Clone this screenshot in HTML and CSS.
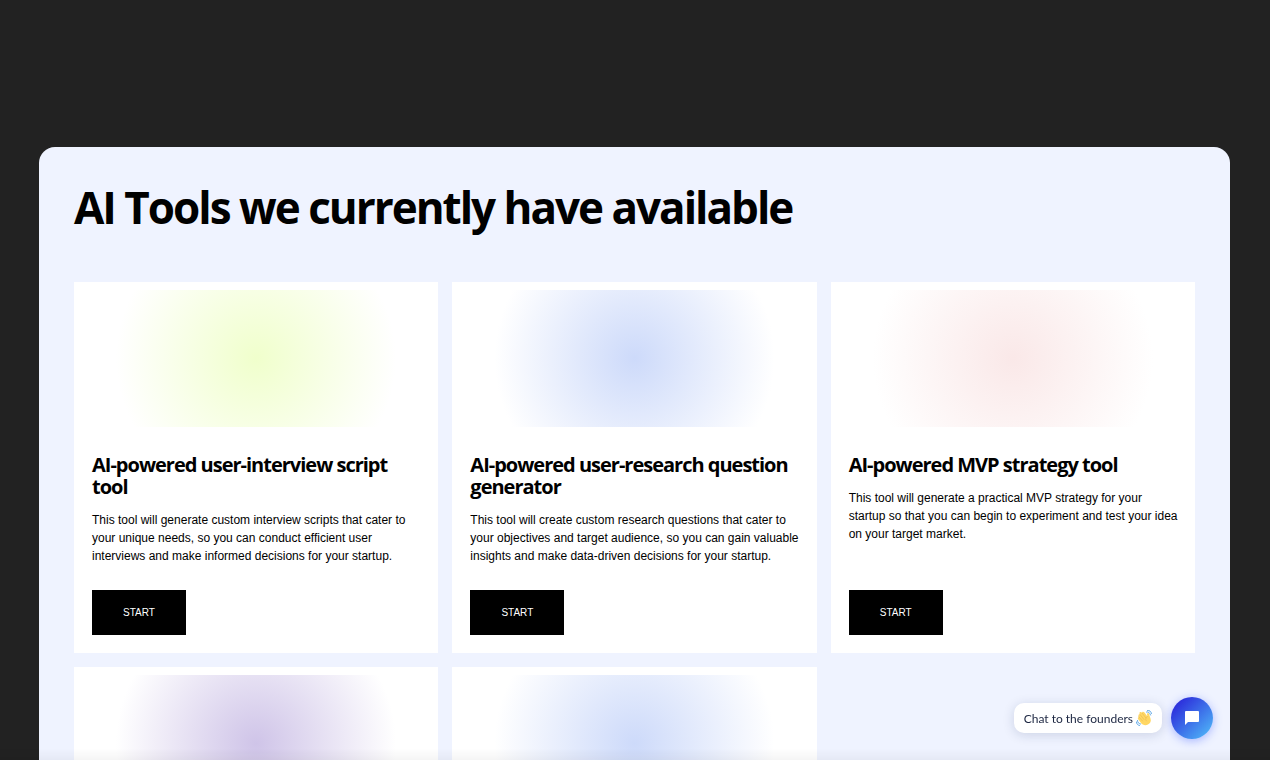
FILE: index.html
```html
<!DOCTYPE html>
<html lang="en">
<head>
    <meta charset="UTF-8">
    <meta name="viewport" content="width=device-width, initial-scale=1.0">
    <title>AI Tools</title>
    <link rel="stylesheet" href="styles.css">
</head>
<body>
    <main class="panel">
        <h1>AI Tools we currently have available</h1>
        <div class="tools">
            <article class="card">
                <div class="glow green"></div>
                <div class="card-body">
                    <h2>AI-powered user-interview script tool</h2>
                    <p>This tool will generate custom interview scripts that cater to your unique needs, so you can conduct efficient user interviews and make informed decisions for your startup.</p>
                    <button type="button" class="start">START</button>
                </div>
            </article>
            <article class="card">
                <div class="glow blue"></div>
                <div class="card-body">
                    <h2>AI-powered user-research question generator</h2>
                    <p>This tool will create custom research questions that cater to your objectives and target audience, so you can gain valuable insights and make data-driven decisions for your startup.</p>
                    <button type="button" class="start">START</button>
                </div>
            </article>
            <article class="card">
                <div class="glow pink"></div>
                <div class="card-body">
                    <h2>AI-powered MVP strategy tool</h2>
                    <p>This tool will generate a practical MVP strategy for your startup so that you can begin to experiment and test your idea on your target market.</p>
                    <button type="button" class="start">START</button>
                </div>
            </article>
            <article class="card">
                <div class="glow purple"></div>
            </article>
            <article class="card">
                <div class="glow blue"></div>
            </article>
        </div>
    </main>

    <div class="chat">
        <div class="chat-label">
            <span>Chat to the founders</span>
            <svg class="wave" viewBox="0 0 32 32" aria-hidden="true">
                <g fill="none" stroke="#5fa8e6" stroke-width="2" stroke-linecap="round">
                    <path d="M21 4c4-1 6 1 8 6M23 1c4-1 7 2 8 6M3 21c0 4 2 6 6 7M1 24c0 4 2 6 6 7"/>
                </g>
                <path fill="#ffd764" d="M5 12c-1-2 1-4 3-3L7 7c-1-2 2-4 4-2l1 1c0-3 3-3 5-1l6 8-1-4c0-3 3-4 4-1l3 9c2 6-1 10-5 12-5 3-11 1-14-3l-6-8c-1-2 0-4 2-4z"/>
                <path fill="none" stroke="#e3b04b" stroke-width="1" stroke-linecap="round" d="M8 9l8 10M12 6l8 10M5 13l8 9M23 13c-4 2-5 6-2 9"/>
            </svg>
        </div>
        <button type="button" class="chat-button" aria-label="Open chat">
            <svg viewBox="0 0 16 16" aria-hidden="true">
                <path fill="#fff" d="M2 1h12a1 1 0 0 1 1 1v9a1 1 0 0 1-1 1H4l-3 3V2a1 1 0 0 1 1-1z"/>
            </svg>
        </button>
    </div>
</body>
</html>
```

FILE: styles.css
```css
* {
    box-sizing: border-box;
}
body {
    margin: 0;
    padding: 147px 40px 40px 39px;
    background-color: #222;
    color: #000;
    font-family: "Liberation Sans", Arial, sans-serif;
}
/* soft shade along the bottom of the window */
body::after {
    content: "";
    position: fixed;
    left: 0;
    right: 0;
    bottom: 0;
    height: 12px;
    background: linear-gradient(transparent, rgba(0, 0, 0, 0.04));
    pointer-events: none;
}
.panel {
    padding: 35px;
    border-radius: 16px;
    background-color: #eff3ff;
}
h1, h2 {
    margin: 0;
    font-family: "Open Sans", sans-serif;
    font-weight: 700;
}
h1 {
    margin-bottom: 50px;
    font-size: 44px;
    line-height: 50px;
    letter-spacing: -2px;
}
.tools {
    display: grid;
    grid-template-columns: repeat(3, 1fr);
    gap: 14px;
}
.card {
    display: flex;
    flex-direction: column;
    padding-top: 8px;
    background-color: #fff;
}
.glow {
    height: 137px;
    background: radial-gradient(circle 140px, var(--glow), #fff);
}
.green {
    --glow: #f0ffcc;
}
.blue {
    --glow: #cddafa;
}
.pink {
    --glow: #fae8e8;
}
.purple {
    --glow: #cfc4e8;
}
.card-body {
    display: flex;
    flex: 1;
    flex-direction: column;
    align-items: flex-start;
    padding: 27px 14px 18px 18px;
}
h2 {
    font-size: 20px;
    line-height: 22px;
    letter-spacing: -1px;
}
p {
    margin: 13px 0 25px;
    font-size: 12px;
    line-height: 18px;
}
.start {
    width: 94px;
    height: 45px;
    margin-top: auto;
    border: none;
    background-color: #000;
    color: #fff;
    font-family: inherit;
    font-size: 10px;
    cursor: pointer;
}
.chat {
    position: fixed;
    right: 57px;
    bottom: 21px;
    z-index: 1;
    display: flex;
    align-items: center;
    gap: 9px;
}
.chat-label {
    display: flex;
    align-items: center;
    gap: 3px;
    height: 30px;
    padding: 0 10px;
    border-radius: 10px;
    background-color: #fff;
    box-shadow: 0 2px 12px rgba(20, 40, 90, 0.16);
    color: #1b2540;
    font-family: Lato, sans-serif;
    font-size: 12px;
}
.wave {
    width: 16px;
    height: 16px;
}
.chat-button {
    display: flex;
    align-items: center;
    justify-content: center;
    width: 42px;
    height: 42px;
    padding: 0;
    border: none;
    border-radius: 50%;
    background: linear-gradient(135deg, #2a27da 10%, #4fb8f8 95%);
    box-shadow: 0 2px 10px rgba(60, 90, 255, 0.4);
    cursor: pointer;
}
.chat-button svg {
    width: 16px;
    height: 16px;
}
```
